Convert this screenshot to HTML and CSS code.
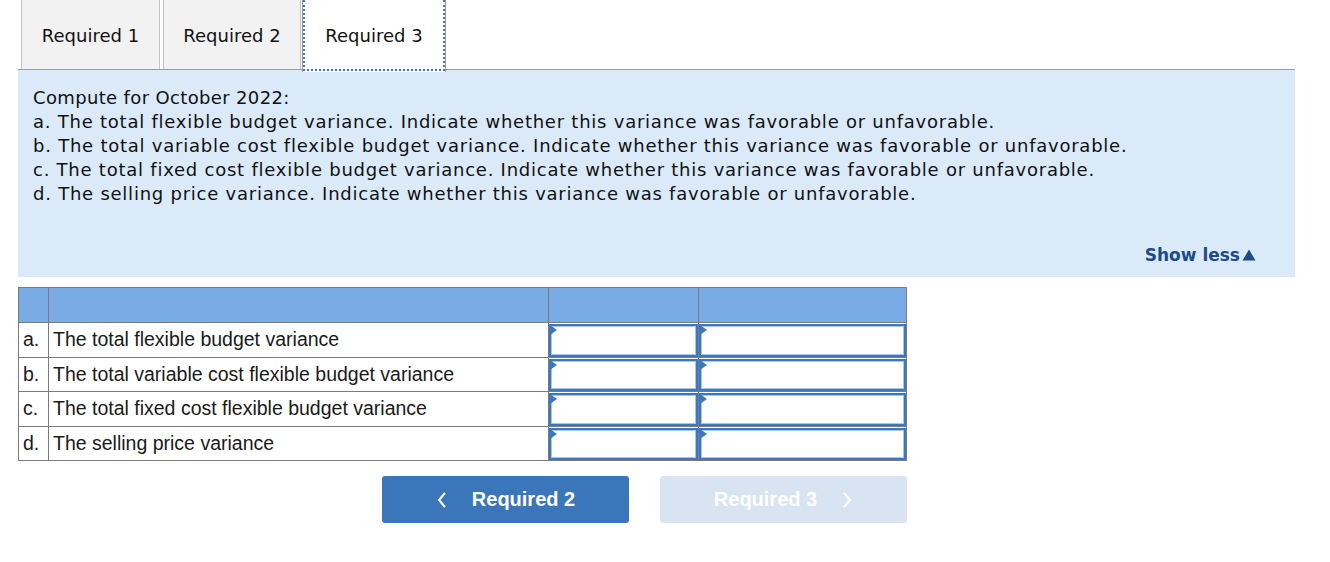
FILE: index.html
```html
<!DOCTYPE html>
<html>
<head>
<meta charset="utf-8">
<link rel="stylesheet" href="styles.css">
</head>
<body>
<div class="page">
  <div class="tabs">
    <div class="tab">Required 1</div>
    <div class="tab">Required 2</div>
    <div class="tab active">Required 3</div>
  </div>
  <div class="panel">
    <div class="instr">
      <div class="head">Compute for October 2022:</div>
      <div class="item">a. The total flexible budget variance. Indicate whether this variance was favorable or unfavorable.</div>
      <div class="item">b. The total variable cost flexible budget variance. Indicate whether this variance was favorable or unfavorable.</div>
      <div class="item">c. The total fixed cost flexible budget variance. Indicate whether this variance was favorable or unfavorable.</div>
      <div class="item">d. The selling price variance. Indicate whether this variance was favorable or unfavorable.</div>
    </div>
    <div class="showless">Show less<svg class="tri" width="14" height="12" viewBox="0 0 14 12"><polygon points="7,0.5 13.5,11.5 0.5,11.5" fill="#1d4b8a"/></svg></div>
  </div>
  <table class="grid">
    <colgroup>
      <col class="c1"><col class="c2"><col class="c3"><col class="c4">
    </colgroup>
    <thead>
      <tr><th></th><th></th><th></th><th></th></tr>
    </thead>
    <tbody>
      <tr><td class="lbl">a.</td><td class="txt">The total flexible budget variance</td><td class="in"><div class="box"></div></td><td class="in"><div class="box"></div></td></tr>
      <tr><td class="lbl">b.</td><td class="txt">The total variable cost flexible budget variance</td><td class="in"><div class="box"></div></td><td class="in"><div class="box"></div></td></tr>
      <tr><td class="lbl">c.</td><td class="txt">The total fixed cost flexible budget variance</td><td class="in"><div class="box"></div></td><td class="in"><div class="box"></div></td></tr>
      <tr><td class="lbl">d.</td><td class="txt">The selling price variance</td><td class="in"><div class="box"></div></td><td class="in"><div class="box"></div></td></tr>
    </tbody>
  </table>
  <div class="nav">
    <div class="btn prev">
      <svg class="chev" width="12" height="18" viewBox="0 0 12 18"><polyline points="9,2 3,9 9,16" fill="none" stroke="#fff" stroke-width="2"/></svg>
      <span>Required 2</span>
    </div>
    <div class="btn next">
      <span>Required 3</span>
      <svg class="chev" width="12" height="18" viewBox="0 0 12 18"><polyline points="3,2 9,9 3,16" fill="none" stroke="#fff" stroke-width="2"/></svg>
    </div>
  </div>
</div>
</body>
</html>
```
FILE: styles.css
```css
html, body {
  margin: 0;
  padding: 0;
  background: #ffffff;
}
.page {
  padding-left: 18px;
  width: 1277px;
}
.tabs {
  display: flex;
  align-items: flex-start;
  height: 69px;
  margin-left: 3px;
  gap: 3px;
}
.tab {
  box-sizing: border-box;
  width: 139px;
  height: 69px;
  padding-top: 1px;
  background: #f2f2f2;
  border-left: 1px solid #c4c4c4;
  border-right: 1px solid #c4c4c4;
  display: flex;
  align-items: center;
  justify-content: center;
  font-family: "DejaVu Sans", Verdana, sans-serif;
  font-size: 18px;
  color: #111;
}
.tab:nth-child(2) {
  width: 138px;
}
.tab.active {
  position: relative;
  z-index: 1;
  width: 144px;
  height: 72px;
  padding-top: 0;
  padding-bottom: 1px;
  margin-left: -2px;
  background: #ffffff;
  border-left: 1px solid #9a9a9a;
  border-right: 1px solid #9a9a9a;
}
.tab.active::after {
  content: "";
  position: absolute;
  left: 0;
  right: 0;
  top: 0;
  bottom: 1px;
  border-left: 2px dotted #3b78c0;
  border-right: 2px dotted #3b78c0;
  border-bottom: 2px dotted #3b78c0;
}
.panel {
  border-top: 1px solid #9c9c9c;
  background: #dbeaf9;
  padding: 16px 39px 10px 15px;
  font-family: "DejaVu Sans", Verdana, sans-serif;
  color: #111;
}
.instr {
  font-size: 18px;
  line-height: 24px;
}
.instr .head {
  letter-spacing: 0.35px;
}
.instr .item {
  letter-spacing: 0.76px;
}
.showless {
  margin-top: 37px;
  display: flex;
  justify-content: flex-end;
  align-items: center;
  gap: 2px;
  font-weight: bold;
  font-size: 17px;
  line-height: 24px;
  color: #1d4b8a;
}
.tri {
  display: block;
  margin-bottom: 1px;
}
.grid {
  margin-top: 10px;
  border-collapse: collapse;
  width: 889px;
  font-family: "Liberation Sans", Arial, sans-serif;
  font-size: 19.5px;
  color: #1a1a1a;
}
.c1 { width: 30px; }
.c2 { width: 501px; }
.c3 { width: 150px; }
.c4 { width: 208px; }
.grid th {
  background: #79ace4;
  border: 1px solid #7b7b7b;
  height: 34px;
  padding: 0;
}
.grid td {
  border: 1px solid #7b7b7b;
  padding: 0;
}
.grid td.lbl {
  padding-left: 4px;
}
.grid td.txt {
  padding-left: 4px;
}
.grid td.in {
  padding: 1px 0 0 0;
  vertical-align: top;
}
.box {
  position: relative;
  box-sizing: border-box;
  height: 32.5px;
  border: 2px solid #3b78c1;
  box-shadow: inset 0 0 0 1px #a8c6ec;
  background: #ffffff;
}
.box::before {
  content: "";
  position: absolute;
  left: -1px;
  top: -1px;
  border-top: 5.5px solid transparent;
  border-bottom: 5.5px solid transparent;
  border-left: 7px solid #3b78c1;
}
.nav {
  width: 889px;
  margin-top: 15px;
  display: flex;
  justify-content: flex-end;
  gap: 31px;
}
.btn {
  box-sizing: border-box;
  width: 247px;
  height: 47px;
  border-radius: 3px;
  display: flex;
  align-items: center;
  justify-content: center;
  gap: 24px;
  font-family: "Liberation Sans", Arial, sans-serif;
  font-weight: bold;
  font-size: 20px;
  color: #ffffff;
}
.btn.prev {
  background: #3a76b9;
}
.btn.next {
  background: #d8e4f1;
}
.chev {
  display: block;
}
```
